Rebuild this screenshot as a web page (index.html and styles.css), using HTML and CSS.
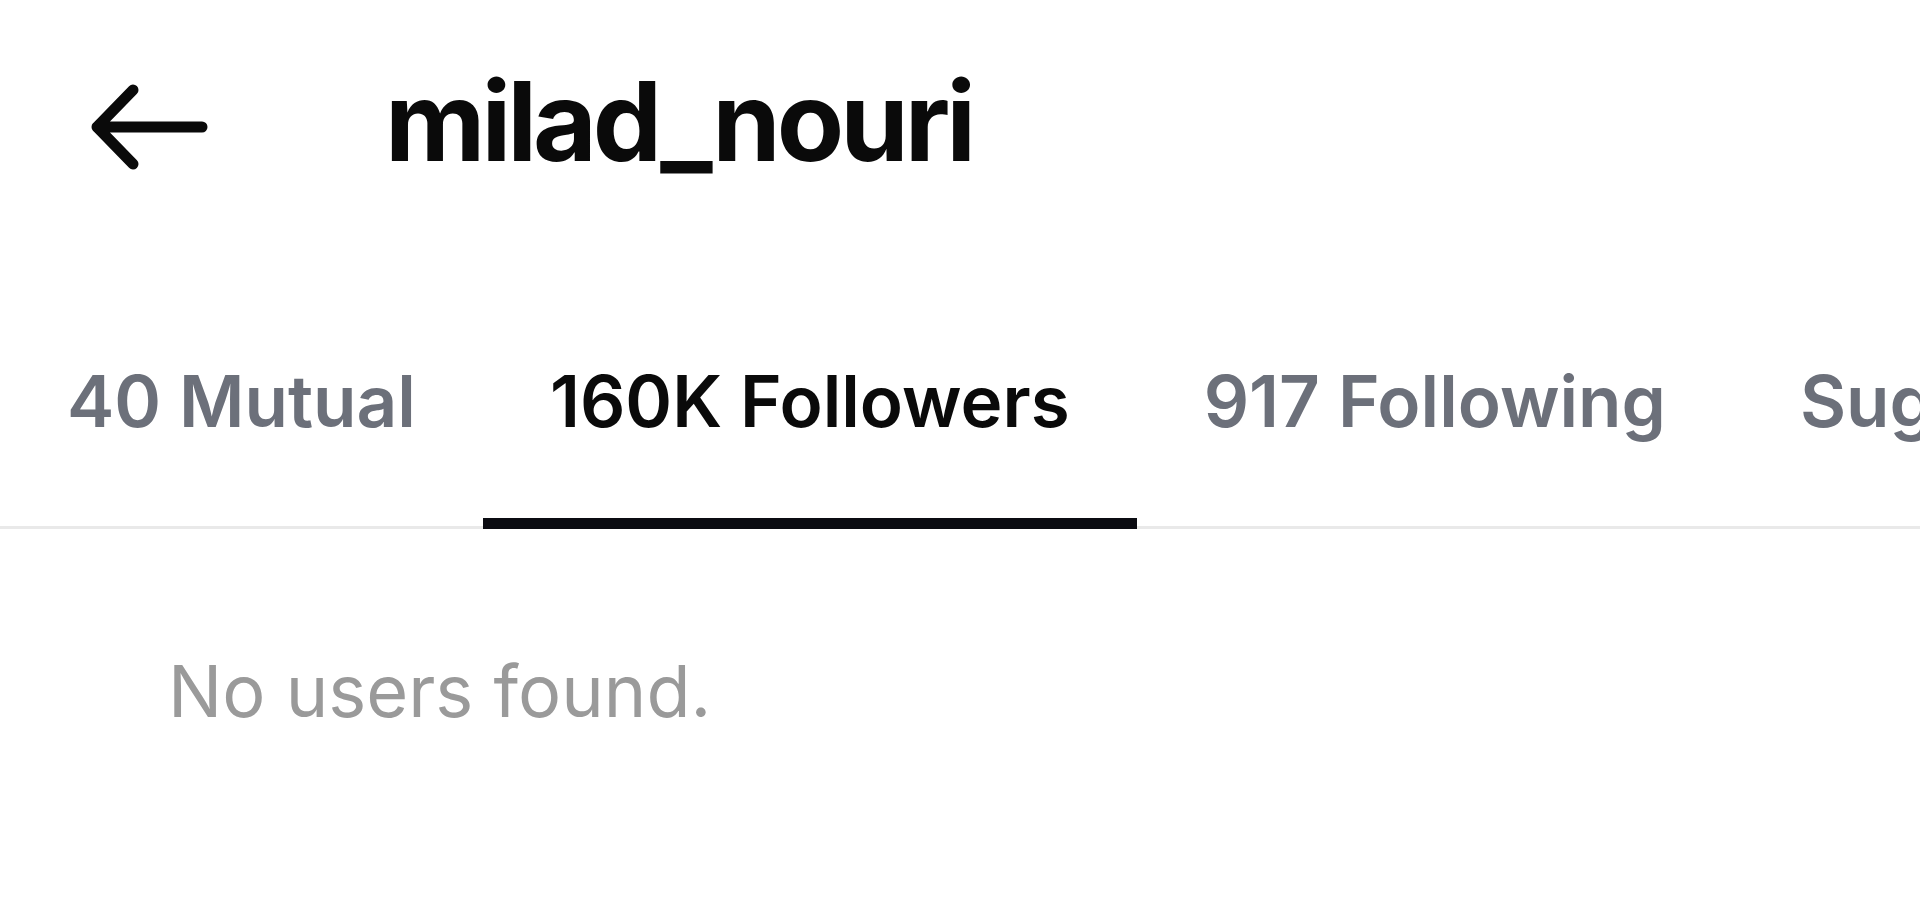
FILE: index.html
```html
<!DOCTYPE html>
<html lang="en">
<head>
<meta charset="utf-8">
<title>milad_nouri · Followers</title>
<link rel="stylesheet" href="styles.css">
</head>
<body>
<div class="page">
  <header class="header">
    <button class="back" aria-label="Back">
      <svg class="back-icon" viewBox="0 0 125 94" width="125" height="94">
        <path d="M46 10 L10 47 L46 84 M10 47 L115 47" fill="none" stroke="#0a0a0a" stroke-width="11" stroke-linecap="round" stroke-linejoin="round"/>
      </svg>
    </button>
    <h1 class="title">milad_nouri</h1>
  </header>
  <nav class="tabs">
    <div class="tab">40 Mutual</div>
    <div class="tab active">160K Followers</div>
    <div class="tab">917 Following</div>
    <div class="tab">Suggested</div>
  </nav>
  <p class="empty">No users found.</p>
</div>
</body>
</html>
```
FILE: styles.css
```css
html, body {
  margin: 0;
  padding: 0;
  background: #ffffff;
  overflow: hidden;
}
body {
  font-family: Inter, "Liberation Sans", sans-serif;
  color: #0a0a0a;
}
.page {
  width: 1920px;
  height: 900px;
  overflow: hidden;
}
.header {
  display: flex;
  align-items: flex-start;
  padding: 55px 0 0 87px;
}
.back {
  border: 0;
  background: none;
  padding: 0;
  margin: 25px 0 0 0;
  width: 125px;
  height: 94px;
  display: flex;
}
.back-icon {
  display: block;
}
.title {
  margin: 0 0 0 173px;
  font-size: 110px;
  line-height: 133px;
  font-weight: 700;
  letter-spacing: -4px;
  color: #0a0a0a;
}
.tabs {
  display: flex;
  margin-top: 170px;
  border-bottom: 3px solid #e9e9e9;
  white-space: nowrap;
}
.tab {
  flex: none;
  padding: 0 67px 74px;
  font-size: 71px;
  line-height: 86px;
  font-weight: 600;
  color: #6c707a;
  border-bottom: 11px solid transparent;
  margin-bottom: -3px;
}
.tab.active {
  color: #0a0a0a;
  border-bottom-color: #0b0c12;
}
.empty {
  margin: 118px 0 0 0;
  padding-left: 168px;
  font-size: 72px;
  line-height: 88px;
  font-weight: 400;
  color: #9a9a9a;
}
```
